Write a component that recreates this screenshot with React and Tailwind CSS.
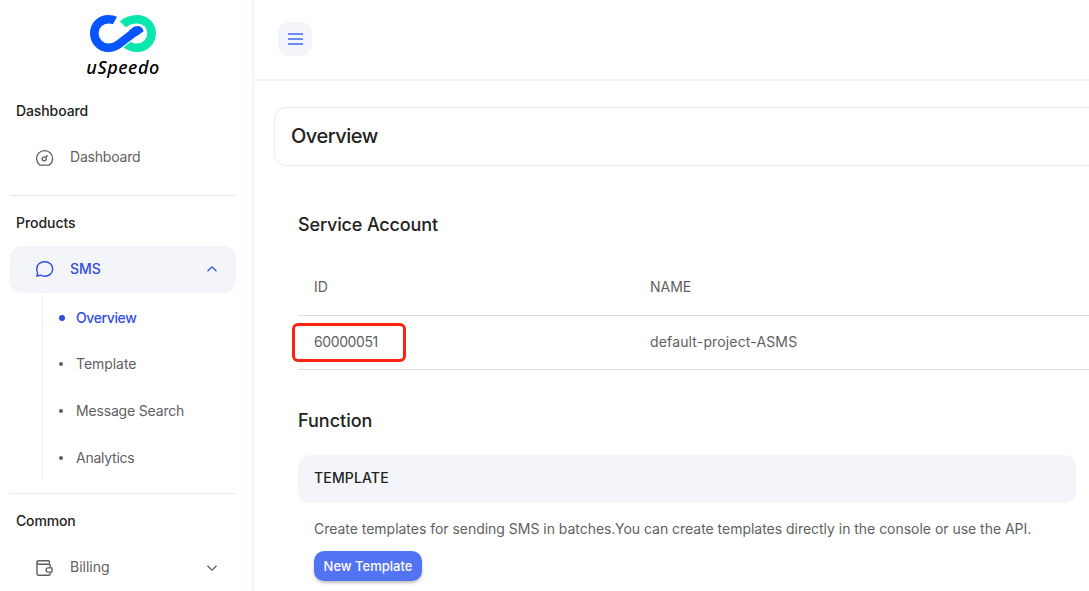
import React from "react";

function Logo() {
  return (
    <div className="flex h-[88px] w-[246px] shrink-0 flex-col items-center pt-[14px]">
      <svg width="68" height="39" viewBox="0 0 68 39" fill="none">
        <path d="M34 10.5 C37.5 6.8 42.5 5.2 48 5.2 C56.5 5.2 62.6 11.4 62.6 19.2 C62.6 27.2 56.5 33.8 48 33.8 C43.5 33.8 39.5 32 36 28.8" stroke="#08e8ae" strokeWidth="8.6" />
        <path d="M28 31.5 L30 30.2 L49 15.4" stroke="#fff" strokeWidth="10.4" />
        <path d="M26 6.6 C24 5.5 22 5.2 19.5 5.2 C11.3 5.2 5.3 11.4 5.3 19.2 C5.3 27.2 11.3 33.8 19.5 33.8 C24 33.8 27 32.4 30 30 L47.5 16.6" stroke="#0755ff" strokeWidth="8.6" />
        <path d="M40 16.8 L42.5 14.4 Q45.5 12 49 12 Q53.6 12.4 54.6 17.3 L48 22Z" fill="#0755ff" />
      </svg>
      <div className="mt-[2px] font-['Noto_Sans',sans-serif] text-[18px] leading-[24px] font-medium tracking-[0.55px] text-black italic">uSpeedo</div>
    </div>
  );
}

function Gauge() {
  return (
    <svg width="18" height="18" viewBox="0 0 18 18" fill="none" stroke="currentColor" strokeWidth="1.3">
      <path d="M3.6 15.8 A8 8 0 1 1 13.6 15.8 Q13.3 16.2 12.6 16.2 H4.6 Q3.9 16.2 3.6 15.8Z" />
      <circle cx="8.2" cy="9.8" r="2" />
      <path d="M9.6 8.3 L11.6 6.3" />
    </svg>
  );
}

function Bubble() {
  return (
    <svg className="mb-px" width="18" height="18" viewBox="0.4 0 18 18" fill="none" stroke="currentColor" strokeWidth="1.4" strokeLinejoin="round">
      <path d="M1.2 16 L2.1 13 C1.4 11.8 1.1 10.4 1.1 9 C1.1 4.9 4.4 1.7 9 1.7 C13.6 1.7 17.1 4.9 17.1 9 C17.1 13.1 13.7 16.2 9 16.2 C7.6 16.2 6.2 15.8 5 15.2Z" />
    </svg>
  );
}

function Wallet() {
  return (
    <svg width="18" height="18" viewBox="0 0 18 18" fill="none" stroke="currentColor" strokeWidth="1.4" strokeLinejoin="round">
      <path d="M13.4 4.8 V2.6 Q13.4 1.7 12.5 1.7 H2.6 Q1 1.7 1 3.3 V14.7 Q1 16.3 2.6 16.3 H12.6 Q14.2 16.3 14.2 14.8 V13.4" />
      <path d="M1 3.4 Q1 5.2 2.8 5.2 H12.8 Q14.2 5.2 14.2 6.6 V8.6" />
      <path d="M16 8.9 V13.1 H12.2 A2.1 2.1 0 0 1 12.2 8.9Z" />
    </svg>
  );
}

function Chevron({ up }) {
  return (
    <svg className={up ? "mb-[2px]" : ""} width="12" height="8" viewBox="0 0 12 8" fill="none" stroke="currentColor" strokeWidth="1.3">
      <path d={up ? "M1.5 6.2 L6 1.8 L10.5 6.2" : "M1.5 1.8 L6 6.2 L10.5 1.8"} />
    </svg>
  );
}

function Heading({ children, className }) {
  return <h2 className={"pl-[6px] text-[14px] leading-[20px] font-medium text-[#222] " + className}>{children}</h2>;
}

function Item({ icon, label, chevron, active, className = "" }) {
  return (
    <div className={"flex h-[47px] items-center rounded-[12px] pr-[18px] pl-[26px] text-[14px] " + (active ? "bg-[#f3f5fa] font-medium text-[#304ee2] " : "text-[#5f5f5f] ") + className}>
      {icon}
      <span className="ml-4 flex-1 pb-px">{label}</span>
      {chevron}
    </div>
  );
}

function SubItem({ label, active, className }) {
  return (
    <li className={"flex items-center text-[14px] " + (active ? "font-medium text-[#304ee2] " : "text-[#5f5f5f] ") + className}>
      <span className={"ml-[16px] rounded-full bg-current " + (active ? "mr-[11px] size-[6px]" : "mr-[13px] size-[4px]")} />
      {label}
    </li>
  );
}

function Sidebar() {
  return (
    <aside className="flex w-[254px] shrink-0 flex-col overflow-hidden border-r-2 border-[#f0f4fc]">
      <Logo />
      <nav className="w-[236px] pl-[10px]">
        <Heading className="mt-[13px] tracking-[-0.1px]">Dashboard</Heading>
        <Item icon={<Gauge />} label="Dashboard" className="mt-[13px] tracking-[-0.2px]" />
        <hr className="mt-[14px] border-[#e9e9ea]" />
        <Heading className="mt-[17px] tracking-[-0.05px]">Products</Heading>
        <Item icon={<Bubble />} label="SMS" active chevron={<Chevron up />} className="mt-[13px]" />
        <ul className="mt-[4px] ml-[32px] h-[183px] border-l border-[#ececee]">
          <SubItem label="Overview" active className="-mt-[2px] h-[46px] tracking-[-0.4px]" />
          <SubItem label="Template" className="-mt-px h-[47px] tracking-[-0.05px]" />
          <SubItem label="Message Search" className="h-[47px] tracking-[-0.17px]" />
          <SubItem label="Analytics" className="h-[47px] tracking-[-0.25px]" />
        </ul>
        <hr className="mt-[15px] border-[#e9e9ea]" />
        <Heading className="mt-[17px] tracking-[-0.15px]">Common</Heading>
        <Item icon={<Wallet />} label="Billing" chevron={<Chevron />} className="mt-[13px]" />
      </nav>
    </aside>
  );
}

export default function App() {
  return (
    <div className="flex h-[591px] w-full overflow-hidden bg-white font-['Inter',sans-serif] text-[14px] leading-[20px] text-[#5f5f5f]">
      <Sidebar />
      <main className="min-w-0 flex-1 overflow-hidden">
        <header className="flex h-[81px] items-center border-b-2 border-[#f0f4fc] pb-px pl-6">
          <button className="flex size-[34px] flex-col items-center justify-center gap-[3px] rounded-[11px] bg-[#f3f5fa]">
            <span className="h-[2px] w-[15px] bg-[#7189f2]" />
            <span className="h-[2px] w-[15px] bg-[#7189f2]" />
            <span className="h-[2px] w-[15px] bg-[#7189f2]" />
          </button>
        </header>
        <div className="mt-[26px] ml-[20px] flex h-[59px] w-[840px] items-center rounded-[12px] border border-[#ebebed] pb-px pl-4">
          <h1 className="text-[20px] font-medium tracking-[-0.5px] text-[#222]">Overview</h1>
        </div>
        <section className="ml-[44px] w-[822px] pt-[47px]">
          <h2 className="text-[18px] leading-[24px] font-medium tracking-[-0.15px] text-[#222]">Service Account</h2>
          <div className="mt-[22px] grid h-[57px] grid-cols-[336px_1fr] items-center border-b border-[#dcdcde] px-4">
            <span>ID</span>
            <span>NAME</span>
          </div>
          <div className="grid h-[54px] grid-cols-[336px_1fr] items-center border-b border-[#dcdcde] px-4 pb-px">
            <span className="relative tracking-[-0.4px]">
              60000051
              <span className="absolute -top-[9px] -left-[22px] h-[39px] w-[114px] rounded-[6px] border-[3px] border-[#fb2410]" />
            </span>
            <span className="tracking-[0.15px]">default-project-ASMS</span>
          </div>
        </section>
        <section className="ml-[44px] w-[778px] pt-[39px]">
          <h2 className="text-[18px] leading-[24px] font-medium text-[#222]">Function</h2>
          <div className="mt-[22px] flex h-[48px] items-center rounded-[12px] bg-[#f3f5fa] px-4 pb-[2px] font-medium tracking-[0.15px] text-[#222]">TEMPLATE</div>
          <p className="mt-[16px] pl-4 tracking-[-0.025px] whitespace-nowrap">
            Create templates for sending SMS in batches.You can create templates directly in the console or use the API.
          </p>
          <button className="mt-[12px] ml-4 h-[30px] w-[108px] rounded-[10px] bg-[#5273f3] text-[13px] font-medium whitespace-nowrap text-white shadow-[0_2px_3px_rgba(0,0,0,0.25)]">New Template</button>
        </section>
      </main>
    </div>
  );
}
